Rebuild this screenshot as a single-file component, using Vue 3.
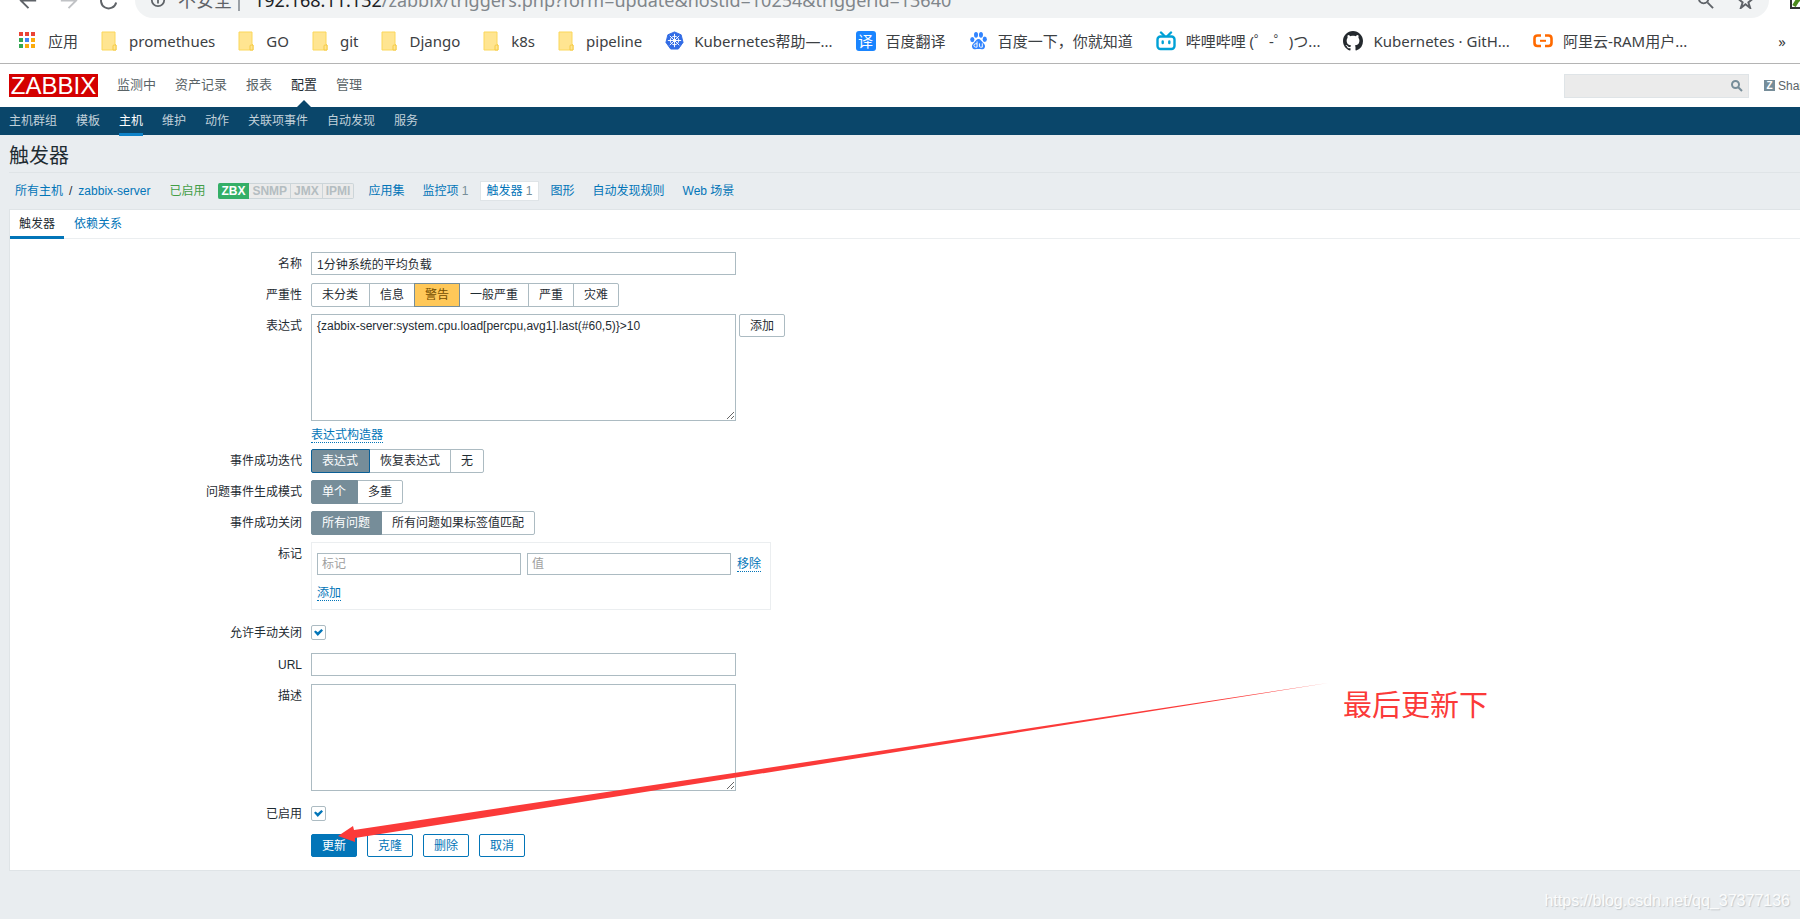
<script setup>
import { ref } from 'vue'

const apps = ['#ea4335', '#ea4335', '#ea4335', '#34a853', '#4285f4', '#fbab0c', '#34a853', '#fbab0c', '#fbab0c']

const bookmarks = [
  { icon: 'folder', text: 'promethues' },
  { icon: 'folder', text: 'GO' },
  { icon: 'folder', text: 'git' },
  { icon: 'folder', text: 'Django' },
  { icon: 'folder', text: 'k8s' },
  { icon: 'folder', text: 'pipeline' },
  { icon: 'kube', text: 'Kubernetes帮助—...' },
  { icon: 'fanyi', text: '百度翻译' },
  { icon: 'baidu', text: '百度一下，你就知道' },
  { icon: 'bili', text: '哔哩哔哩 (゜-゜)つ...' },
  { icon: 'github', text: 'Kubernetes · GitH...' },
  { icon: 'aliyun', text: '阿里云-RAM用户...' },
]

const mainMenu = ['监测中', '资产记录', '报表', '配置', '管理']
const subMenu = ['主机群组', '模板', '主机', '维护', '动作', '关联项事件', '自动发现', '服务']

const name = ref('1分钟系统的平均负载')
const expression = ref('{zabbix-server:system.cpu.load[percpu,avg1].last(#60,5)}>10')
const severity = ref('警告')
const recovery = ref('表达式')
const mode = ref('单个')
const correlation = ref('所有问题')
const manualClose = ref(true)
const enabled = ref(true)
const url = ref('')
const description = ref('')
const tagName = ref('')
const tagValue = ref('')

const severities = ['未分类', '信息', '警告', '一般严重', '严重', '灾难']
const recoveries = ['表达式', '恢复表达式', '无']
const modes = ['单个', '多重']
const correlations = ['所有问题', '所有问题如果标签值匹配']
</script>

<template>
  <div class="page">
    <div class="toolbar">
      <div class="tools">
        <svg class="tool" viewBox="0 0 24 24"><path d="M20 12H5M12 4l-8 8 8 8" /></svg>
        <svg class="tool dim" viewBox="0 0 24 24"><path d="M4 12h15M12 4l8 8-8 8" /></svg>
        <svg class="tool" viewBox="0 0 24 24"><path d="M19 8a8 8 0 1 0 1 6M20 3v6h-6" /></svg>
      </div>
      <div class="omnibox">
        <svg class="info" viewBox="0 0 18 18"><circle cx="9" cy="9" r="7" /><path d="M9 8v5M9 5v2" /></svg>
        <span class="insecure">不安全</span>
        <span class="bar"></span>
        <span class="address"><b>192.168.11.132</b>/zabbix/triggers.php?form=update&amp;hostid=10254&amp;triggerid=13640</span>
        <svg class="glass" viewBox="0 0 18 18"><circle cx="7" cy="7" r="5" /><path d="M11 11l6 6" /></svg>
        <svg class="star" viewBox="0 0 18 18"><path d="M9 1l2 6h6l-5 4 2 6-5-4-5 4 2-6-5-4h6z" /></svg>
      </div>
      <svg class="ext" viewBox="0 0 18 18"><path d="M2 0v16h16" stroke="#333" /><path d="M5 14l5-8 8 8" stroke="#4c8a1c" stroke-width="4" /></svg>
    </div>

    <nav class="bookmarks">
      <a href="#" class="mark first">
        <svg class="apps" viewBox="0 0 17 17">
          <rect v-for="(c, i) in apps" :key="i" :x="(i % 3) * 6" :y="Math.floor(i / 3) * 6" width="4" height="4" :fill="c" />
        </svg>
        <span>应用</span>
      </a>
      <a v-for="b in bookmarks" :key="b.text" href="#" class="mark" :class="{ site: b.icon !== 'folder' }">
        <svg v-if="b.icon === 'folder'" class="folder" viewBox="0 0 16 20">
          <path d="M1 1h13v12l1 1v5H1z" fill="#ffe591" stroke="#fbd75b" />
          <path d="M12 19v-4q0-1 1-1h2v5z" fill="#ffe591" stroke="#f5ca45" />
        </svg>
        <svg v-else-if="b.icon === 'kube'" class="logo" viewBox="0 0 20 20">
          <path d="M10 1l7 3 2 8-5 7H6l-5-7 2-8z" fill="#326ce5" stroke="#326ce5" stroke-linejoin="round" />
          <g fill="none" stroke="#fff"><circle cx="10" cy="10" r="4.5" /><circle cx="10" cy="10" r="1.2" /><path d="M10 3v14M3 10h14M5 5l10 10M15 5L5 15" /></g>
        </svg>
        <span v-else-if="b.icon === 'fanyi'" class="fanyi">译</span>
        <svg v-else-if="b.icon === 'baidu'" class="logo" viewBox="0 0 20 20" fill="#3385ff">
          <ellipse cx="3.5" cy="9" rx="2.2" ry="2.8" /><ellipse cx="7.4" cy="4" rx="2.1" ry="3" /><ellipse cx="12.6" cy="4" rx="2.1" ry="3" /><ellipse cx="16.6" cy="8.7" rx="2.2" ry="2.8" />
          <path d="M10 8.500c2 0 3 2 4.500 3.500 2 2 3 3 2 5.500-1 2.500-4 1.500-6.500 1.500S4.500 20 3.500 17.500s0-3.500 2-5.500C7 10.500 8 8.500 10 8.500z" />
          <path d="M8.500 11v6H7a1.500 1.500 0 0 1 0-3.500h1.500M11 13v3q0 1 1 1h2v-4" fill="none" stroke="#fff" />
        </svg>
        <svg v-else-if="b.icon === 'bili'" class="logo wide" viewBox="0 0 20 20" fill="none" stroke="#00a1d6" stroke-width="2.400" stroke-linecap="round">
          <rect x="1.500" y="5.500" width="17" height="12.500" rx="3" /><path d="M5 1.500l3 3M15 1.500l-3 3M6.700 10.500v1.500M13.300 10.500v1.500" />
        </svg>
        <svg v-else-if="b.icon === 'github'" class="logo wide" viewBox="0 0 16 16">
          <path fill="#24292e" d="M8 0C3.580 0 0 3.580 0 8c0 3.540 2.290 6.530 5.470 7.590.4.070.55-.17.55-.38 0-.19-.01-.82-.01-1.490-2.010.37-2.530-.49-2.690-.94-.09-.23-.48-.94-.82-1.130-.28-.15-.68-.52-.01-.53.63-.01 1.080.58 1.230.82.72 1.210 1.870.87 2.330.66.07-.52.28-.87.51-1.070-1.780-.2-3.640-.89-3.640-3.950 0-.87.31-1.590.82-2.150-.08-.2-.36-1.020.08-2.120 0 0 .67-.21 2.200.82.64-.18 1.320-.27 2-.27s1.360.09 2 .27c1.530-1.040 2.200-.82 2.200-.82.44 1.100.16 1.920.08 2.120.51.56.82 1.270.82 2.150 0 3.070-1.870 3.750-3.650 3.950.29.25.54.73.54 1.480 0 1.070-.01 1.930-.01 2.200 0 .21.15.46.55.38A8.010 8.010 0 0 0 16 8c0-4.420-3.580-8-8-8z" />
        </svg>
        <svg v-else class="logo wide" viewBox="0 0 20 20" fill="none" stroke="#ff6a00" stroke-width="2.600">
          <path d="M8 4.500H4.500q-3 0-3 3v4.500q0 3 3 3H8M12 4.500h3.500q3 0 3 3v4.500q0 3-3 3H12" /><path d="M7 9.800h6" stroke-width="2" />
        </svg>
        <span>{{ b.text }}</span>
      </a>
      <button type="button" class="more" aria-label="更多书签">»</button>
    </nav>

    <header class="head">
      <a href="#" class="brand">ZABBIX</a>
      <nav class="main-menu">
        <a v-for="m in mainMenu" :key="m" href="#" :class="{ on: m === '配置' }">{{ m }}</a>
      </nav>
      <div class="search">
        <input type="text" aria-label="搜索">
        <svg viewBox="0 0 12 12"><circle cx="4.500" cy="4.500" r="3.500" /><path d="M7 7l4 4" /></svg>
      </div>
      <a href="#" class="share"><i>Z</i>Share</a>
    </header>
    <nav class="sub-menu">
      <a v-for="m in subMenu" :key="m" href="#" :class="{ on: m === '主机' }">{{ m }}</a>
    </nav>

    <main>
      <h1>触发器</h1>
      <div class="crumbs">
        <span class="path"><a href="#">所有主机</a><span>/</span><a href="#">zabbix-server</a></span>
        <span class="ok">已启用</span>
        <span class="badges"><b class="live">ZBX</b><b>SNMP</b><b>JMX</b><b>IPMI</b></span>
        <a href="#">应用集</a>
        <span class="count"><a href="#">监控项</a> 1</span>
        <span class="count current"><a href="#">触发器</a> 1</span>
        <a href="#">图形</a>
        <a href="#">自动发现规则</a>
        <a href="#">Web 场景</a>
      </div>

      <form class="panel" @submit.prevent>
        <div class="tabs"><a href="#" class="on">触发器</a><a href="#">依赖关系</a></div>
        <div class="rows">
          <div class="row">
            <label class="label" for="name">名称</label>
            <input id="name" v-model="name" class="field" type="text">
          </div>
          <div class="row">
            <span class="label">严重性</span>
            <div class="seg severity" role="radiogroup" aria-label="严重性">
              <label v-for="s in severities" :key="s"><input v-model="severity" type="radio" name="severity" :value="s"><span>{{ s }}</span></label>
            </div>
          </div>
          <div class="row">
            <label class="label" for="expr">表达式</label>
            <textarea id="expr" v-model="expression" class="field" spellcheck="false"></textarea>
            <button type="button" class="plain">添加</button>
          </div>
          <div class="row link-row">
            <span class="label"></span>
            <a href="#" class="dotted">表达式构造器</a>
          </div>
          <div class="row">
            <span class="label">事件成功迭代</span>
            <div class="seg focus" role="radiogroup" aria-label="事件成功迭代">
              <label v-for="s in recoveries" :key="s"><input v-model="recovery" type="radio" name="recovery" :value="s"><span>{{ s }}</span></label>
            </div>
          </div>
          <div class="row">
            <span class="label">问题事件生成模式</span>
            <div class="seg" role="radiogroup" aria-label="问题事件生成模式">
              <label v-for="s in modes" :key="s"><input v-model="mode" type="radio" name="mode" :value="s"><span>{{ s }}</span></label>
            </div>
          </div>
          <div class="row">
            <span class="label">事件成功关闭</span>
            <div class="seg" role="radiogroup" aria-label="事件成功关闭">
              <label v-for="s in correlations" :key="s"><input v-model="correlation" type="radio" name="correlation" :value="s"><span>{{ s }}</span></label>
            </div>
          </div>
          <div class="row">
            <span class="label">标记</span>
            <div class="tags">
              <div class="tag">
                <input v-model="tagName" type="text" placeholder="标记" aria-label="标记">
                <input v-model="tagValue" type="text" placeholder="值" aria-label="值">
                <a href="#" class="dotted">移除</a>
              </div>
              <a href="#" class="dotted">添加</a>
            </div>
          </div>
          <div class="row check">
            <label class="label" for="manual">允许手动关闭</label>
            <input id="manual" v-model="manualClose" type="checkbox">
          </div>
          <div class="row">
            <label class="label" for="url">URL</label>
            <input id="url" v-model="url" class="field" type="text">
          </div>
          <div class="row">
            <label class="label" for="desc">描述</label>
            <textarea id="desc" v-model="description" class="field"></textarea>
          </div>
          <div class="row check">
            <label class="label" for="enabled">已启用</label>
            <input id="enabled" v-model="enabled" type="checkbox">
          </div>
          <div class="row actions">
            <span class="label"></span>
            <button type="submit" class="primary">更新</button>
            <button type="button">克隆</button>
            <button type="button">删除</button>
            <button type="button">取消</button>
          </div>
        </div>
      </form>
    </main>

    <svg class="pointer" viewBox="0 0 990 159" aria-hidden="true">
      <path d="M0 153L15 143L16 147L452 81.500L990 0L452 86L17 155L17 159Z" fill="#fb3a39" />
    </svg>
    <p class="note">最后更新下</p>
    <p class="watermark">https://blog.csdn.net/qq_37377136</p>
  </div>
</template>

<style>
body {
  margin: 0;
  background: #e9edf0;
}
</style>

<style scoped>
.page {
  position: relative;
  min-height: 100vh;
  overflow: hidden;
  background: #e9edf0;
  color: #1f2c33;
  font: 12px/18px "Liberation Sans", Arial, "Noto Sans CJK SC", sans-serif;
}
* {
  box-sizing: border-box;
}
a {
  color: #0275b8;
  text-decoration: none;
}
button, input, textarea {
  margin: 0;
  font: inherit;
  color: inherit;
}

/* browser chrome */
.toolbar {
  display: flex;
  align-items: flex-end;
  height: 18px;
  overflow: hidden;
  background: #fff;
}
.tools {
  display: flex;
  flex: none;
  align-items: center;
  gap: 17px;
  width: 135px;
  height: 36px;
  padding-left: 17px;
}
.tool {
  width: 23px;
  height: 23px;
  fill: none;
  stroke: #5f6368;
  stroke-width: 2;
}
.dim {
  stroke: #c0c2c5;
}
.omnibox {
  display: flex;
  flex: 1;
  align-items: center;
  height: 36px;
  padding: 0 15px;
  border-radius: 18px;
  background: #f1f3f4;
  font: 18px/36px "Noto Sans", "Noto Sans CJK SC", sans-serif;
  color: #80868b;
  white-space: nowrap;
}
.omnibox svg {
  fill: none;
  stroke: #5f6368;
  stroke-width: 2;
}
.info {
  width: 16px;
  height: 16px;
}
.insecure {
  margin-left: 12px;
  color: #5f6368;
}
.bar {
  width: 2px;
  height: 22px;
  margin: 0 14px 0 6px;
  background: #9aa0a6;
}
.address {
  flex: 1;
}
.address b {
  font-weight: 400;
  color: #202124;
}
.glass {
  width: 17px;
  height: 17px;
  margin-right: 23px;
}
.star {
  width: 17px;
  height: 17px;
}
.ext {
  flex: none;
  width: 18px;
  height: 18px;
  margin: 0 -7px 8px 20px;
  fill: none;
  stroke-width: 2;
}
.bookmarks {
  display: flex;
  align-items: center;
  gap: 23px;
  height: 46px;
  padding: 0 14px 0 19px;
  border-bottom: 1px solid #b4b4b4;
  background: #fff;
  font: 15px/20px "Noto Sans", "Noto Sans CJK SC", sans-serif;
}
.mark {
  display: flex;
  flex: none;
  align-items: center;
  gap: 12px;
  color: #3c4043;
  white-space: nowrap;
}
.mark.site {
  gap: 10px;
}
.apps {
  width: 17px;
  height: 17px;
}
.folder {
  width: 16px;
  height: 20px;
}
.logo {
  width: 19px;
  height: 19px;
}
.wide {
  width: 20px;
  height: 20px;
}
.fanyi {
  width: 20px;
  height: 20px;
  border-radius: 3px;
  background: #1a85ff;
  color: #fff;
  text-align: center;
}
.more {
  margin-left: auto;
  padding: 0;
  border: 0;
  background: none;
  color: #3c4043;
}

/* application header */
.head {
  display: flex;
  align-items: center;
  height: 43px;
  padding-left: 9px;
  overflow: hidden;
  background: #fff;
}
.brand {
  flex: none;
  width: 89px;
  height: 23px;
  background: #d40000;
  color: #fff;
  font: 24px/24px "Liberation Sans", Arial, sans-serif;
  text-align: center;
}
.main-menu {
  display: flex;
  flex: 1;
  gap: 19px;
  height: 43px;
  margin-left: 19px;
  font-size: 13px;
  line-height: 42px;
}
.main-menu a {
  position: relative;
  color: #5a6468;
}
.main-menu .on {
  color: #1f2c33;
}
.main-menu .on::after {
  content: "";
  position: absolute;
  bottom: 0;
  left: 6px;
  border: 7px solid transparent;
  border-top-width: 0;
  border-bottom-color: #0a466a;
}
.search {
  display: flex;
  flex: none;
  align-items: center;
  width: 185px;
  height: 24px;
  padding-right: 5px;
  border: 1px solid #dfe4e7;
  background: #ebebeb;
}
.search input {
  flex: 1;
  min-width: 0;
  border: 0;
  outline: 0;
  background: none;
}
.search svg {
  width: 12px;
  height: 12px;
  fill: none;
  stroke: #768d99;
  stroke-width: 2;
}
.share {
  display: flex;
  flex: none;
  align-items: center;
  gap: 3px;
  width: 36px;
  margin-left: 15px;
  color: #5a6468;
}
.share i {
  flex: none;
  width: 11px;
  height: 11px;
  background: #768d99;
  color: #fff;
  font: bold 10px/11px "Liberation Sans", Arial, sans-serif;
  text-align: center;
}
.sub-menu {
  display: flex;
  gap: 19px;
  height: 28px;
  padding-left: 9px;
  background: #0a466a;
  line-height: 28px;
}
.sub-menu a {
  height: 29px;
  color: #c2d1da;
}
.sub-menu .on {
  border-bottom: 3px solid #0f83c9;
  color: #fff;
}

/* page heading */
main {
  padding-left: 9px;
}
h1 {
  margin: 0;
  padding: 9px 0 4px;
  border-bottom: 1px solid #dfe4e7;
  font-size: 20px;
  font-weight: 400;
  line-height: 24px;
}
.crumbs {
  display: flex;
  align-items: center;
  height: 36px;
  padding-left: 6px;
  gap: 18px;
  white-space: nowrap;
}
.path {
  display: flex;
  gap: 6px;
  margin-right: 1px;
}
.ok {
  color: #429e47;
}
.badges {
  display: flex;
  margin: 0 -4px 0 -5px;
}
.badges b {
  height: 16px;
  padding: 0 3px;
  border: 1px solid #ccd5d9;
  border-left-width: 0;
  background: #ebebeb;
  color: #b4bdc1;
  font-weight: 700;
  line-height: 14px;
}
.badges .live {
  border-color: #34af67;
  border-radius: 2px 0 0 2px;
  background: #34af67;
  color: #fff;
}
.badges b:last-child {
  border-radius: 0 2px 2px 0;
}
.count {
  color: #768d99;
}
.current {
  margin: 0 -6px;
  padding: 0 5px;
  border: 1px solid #dfe4e7;
  background: #fff;
}

/* form panel */
.panel {
  border: 1px solid #dfe4e7;
  border-right: 0;
  background: #fff;
}
.tabs {
  display: flex;
  gap: 1px;
  height: 29px;
  border-bottom: 1px solid #ebeef0;
  line-height: 28px;
}
.tabs a {
  height: 29px;
  padding: 0 9px;
}
.tabs .on {
  border-bottom: 3px solid #0275b8;
  color: #1f2c33;
}
.rows {
  display: flex;
  flex-direction: column;
  gap: 7px;
  padding: 13px 0 12px;
}
.row {
  display: flex;
  align-items: flex-start;
  min-height: 24px;
}
.label {
  flex: none;
  width: 292px;
  margin-right: 9px;
  line-height: 24px;
  text-align: right;
}
.field, .tag input {
  width: 425px;
  height: 23px;
  padding: 0 5px;
  border: 1px solid #acbbc2;
  border-radius: 0;
  outline: 0;
  background: #fff;
}
textarea.field {
  height: 107px;
  padding: 3px 5px;
  line-height: 16px;
  resize: both;
}
button {
  height: 23px;
  padding: 0 10px;
  border: 1px solid #0275b8;
  border-radius: 2px;
  background: #fff;
  color: #0275b8;
  line-height: 20px;
}
.plain {
  margin-left: 3px;
  border-color: #acbbc2;
  color: #1f2c33;
}
.link-row {
  height: 14px;
  min-height: 0;
}
.dotted {
  border-bottom: 1px dotted #0275b8;
  line-height: 14px;
}
.seg {
  display: flex;
}
.seg label {
  position: relative;
  margin-right: -1px;
}
.seg input {
  position: absolute;
  inset: 0;
  opacity: 0;
}
.seg span {
  display: block;
  height: 24px;
  padding: 0 10px;
  border: 1px solid #acbbc2;
  line-height: 22px;
}
.seg label:first-child span {
  padding-right: 11px;
  border-radius: 2px 0 0 2px;
}
.seg label:last-child span {
  border-radius: 0 2px 2px 0;
}
.seg :checked + span {
  position: relative;
  z-index: 1;
  border-color: #768d99;
  background: #768d99;
  color: #fff;
}
.severity :checked + span {
  background: #ffc859;
  color: #734d00;
}
.focus :checked + span {
  border-color: #0a5f96;
}
.tags {
  height: 68px;
  padding: 10px 9px 0 5px;
  border: 1px solid #ebeef0;
}
.tag {
  display: flex;
  align-items: center;
  gap: 6px;
  margin-bottom: 9px;
}
.tag input {
  width: 204px;
  height: 22px;
  padding: 0 4px;
}
.tag input::placeholder {
  color: #a0a0a0;
}
.check {
  align-items: center;
  min-height: 29px;
  padding-top: 2px;
}
.check input {
  display: grid;
  place-items: center;
  width: 15px;
  height: 15px;
  border: 1px solid #acbbc2;
  border-radius: 2px;
  appearance: none;
  background: #fff;
}
.check input:checked::before {
  content: "";
  width: 9px;
  height: 7px;
  background: #0275b8;
  clip-path: polygon(0 40%, 18% 20%, 42% 48%, 82% 0, 100% 20%, 42% 100%);
}
.actions button {
  margin-right: 10px;
}
.actions .primary {
  background: #0275b8;
  color: #fff;
}

/* annotations drawn above the page */
.pointer {
  position: absolute;
  top: 683px;
  left: 338px;
  width: 990px;
  height: 159px;
  pointer-events: none;
}
.note {
  position: absolute;
  top: 686px;
  left: 1343px;
  margin: 0;
  color: #fb3a39;
  font-size: 29px;
  line-height: 40px;
}
.watermark {
  position: absolute;
  right: 10px;
  bottom: 6px;
  margin: 0;
  color: #fbfcfc;
  font-size: 16px;
  line-height: 24px;
  text-shadow: 1px 1px 1px #c3c8cb;
}
</style>
